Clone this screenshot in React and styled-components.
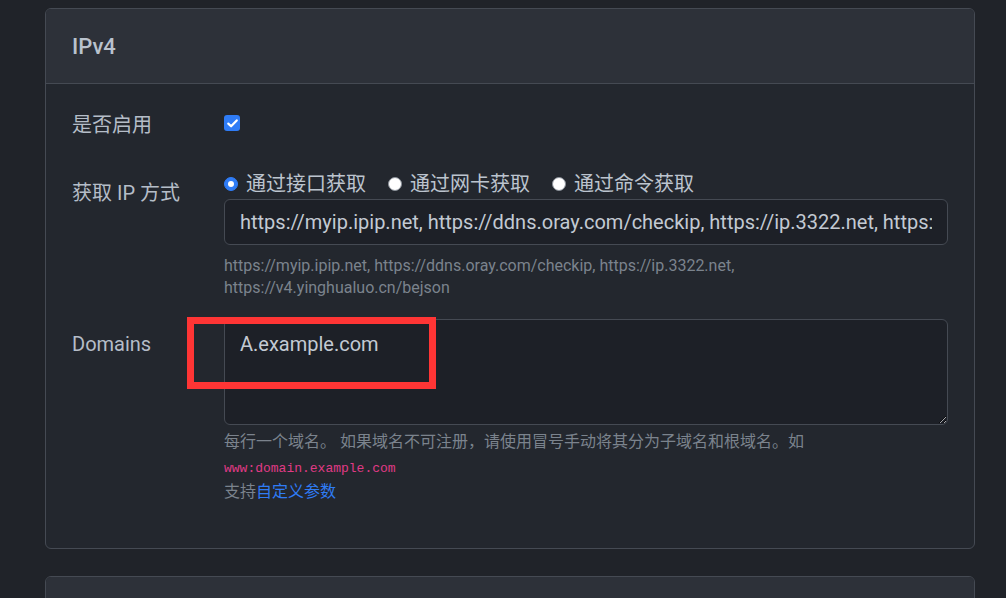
import React from "react";
import styled, { createGlobalStyle } from "styled-components";

const Global = createGlobalStyle`
  html, body { margin: 0; padding: 0; overflow: hidden; background: #202329; }
  body { font-family: Roboto, "Noto Sans CJK SC", sans-serif; }
  * { box-sizing: border-box; }
`;

const Page = styled.div`
  padding: 8px 31px 0 45px;
  display: flex;
  flex-direction: column;
  gap: 27px;
`;

const Card = styled.section`
  border: 1px solid #454a53;
  border-radius: 6px;
  background: #23272e;
  overflow: hidden;
`;

const CardHeader = styled.div`
  height: 75px;
  display: flex;
  align-items: center;
  padding: 1px 26px 0;
  background: #2d3139;
  border-bottom: 1px solid #454a53;
  color: #b9c2cd;
  font-size: 22px;
  font-weight: 500;
`;

const CardBody = styled.div`
  padding: 18px 26px 45px;
  display: flex;
  flex-direction: column;
`;

const Row = styled.div`
  position: relative;
  display: grid;
  grid-template-columns: 152px 1fr;
  margin-bottom: ${(p) => p.$mb ?? 0}px;
`;

const Label = styled.div`
  padding-top: ${(p) => p.$pt ?? 8}px;
  padding-bottom: 8px;
  font-size: 20px;
  line-height: 30px;
  color: #b5bdc8;
`;

const Field = styled.div`
  display: flex;
  flex-direction: column;
  padding-top: ${(p) => p.$pt ?? 0}px;
`;

const CheckBox = styled.span`
  width: 16px;
  height: 16px;
  border-radius: 3px;
  background: #2f7cf6;
  display: flex;
  align-items: center;
  justify-content: center;
`;

const RadioGroup = styled.div`
  display: flex;
  align-items: center;
  gap: 22px;
  height: 30px;
`;

const RadioItem = styled.label`
  display: flex;
  align-items: center;
  gap: 8px;
  font-size: 20px;
  line-height: 30px;
  color: #bcc4ce;
`;

const RadioDot = styled.span`
  width: 14px;
  height: 14px;
  border-radius: 50%;
  flex: none;
  background: ${(p) => (p.$on ? "#2f7cf6" : "#ffffff")};
  border: 1px solid ${(p) => (p.$on ? "#2f7cf6" : "#8a9099")};
  display: flex;
  align-items: center;
  justify-content: center;
  &::after {
    content: "";
    display: ${(p) => (p.$on ? "block" : "none")};
    width: 6px;
    height: 6px;
    border-radius: 50%;
    background: #ffffff;
  }
`;

const TextInput = styled.input`
  width: 100%;
  height: 46px;
  padding: 7px 15px;
  font-family: Roboto, "Noto Sans CJK SC", sans-serif;
  font-size: 20px;
  line-height: 30px;
  color: #c3cad3;
  background: #1d2027;
  border: 1px solid #454a53;
  border-radius: 6px;
  outline: none;
`;

const TextArea = styled.textarea`
  display: block;
  width: 100%;
  height: 106px;
  padding: 9px 15px;
  font-family: Roboto, "Noto Sans CJK SC", sans-serif;
  font-size: 20px;
  line-height: 30px;
  color: #c3cad3;
  background: #1d2027;
  border: 1px solid #454a53;
  border-radius: 6px;
  outline: none;
  resize: vertical;
  color-scheme: dark;
`;

const Hint = styled.div`
  margin-top: ${(p) => p.$mt ?? 0}px;
  font-size: 16px;
  line-height: 22px;
  color: #7b838d;
`;

const Code = styled.code`
  display: block;
  margin-top: 5px;
  margin-bottom: 1px;
  font-family: "Liberation Mono", "DejaVu Sans Mono", monospace;
  font-size: 13px;
  line-height: 22px;
  color: #e03a86;
`;

const Link = styled.a`
  color: #2f7cf6;
  text-decoration: none;
`;

const Annotation = styled.div`
  position: absolute;
  left: 115px;
  top: -2px;
  width: 249px;
  height: 72px;
  border: 7px solid #ff3535;
  pointer-events: none;
`;

const CheckIcon = () => (
  <svg width="11" height="9" viewBox="0 0 11 9" fill="none">
    <path d="M1.3 4.6 L4.1 7.3 L9.7 1.4" stroke="#fff" strokeWidth="2.2" strokeLinecap="round" strokeLinejoin="round" />
  </svg>
);

const urls =
  "https://myip.ipip.net, https://ddns.oray.com/checkip, https://ip.3322.net, https://v4.yinghualuo.cn/bejson";

export default function App() {
  return (
    <>
      <Global />
      <Page>
        <Card>
          <CardHeader>IPv4</CardHeader>
          <CardBody>
            <Row $mb={21}>
              <Label>是否启用</Label>
              <Field $pt={13}>
                <CheckBox>
                  <CheckIcon />
                </CheckBox>
              </Field>
            </Row>
            <Row $mb={20}>
              <Label $pt={9}>获取 IP 方式</Label>
              <Field>
                <RadioGroup>
                  <RadioItem>
                    <RadioDot $on />
                    通过接口获取
                  </RadioItem>
                  <RadioItem>
                    <RadioDot />
                    通过网卡获取
                  </RadioItem>
                  <RadioItem>
                    <RadioDot />
                    通过命令获取
                  </RadioItem>
                </RadioGroup>
                <TextInput defaultValue={urls} readOnly />
                <Hint $mt={10}>
                  https://myip.ipip.net, https://ddns.oray.com/checkip, https://ip.3322.net,
                  <br />
                  https://v4.yinghualuo.cn/bejson
                </Hint>
              </Field>
            </Row>
            <Row>
              <Label $pt={10}>Domains</Label>
              <Field>
                <TextArea defaultValue="A.example.com" readOnly />
                <Hint $mt={6}>
                  每行一个域名。 如果域名不可注册，请使用冒号手动将其分为子域名和根域名。如
                  <Code>www:domain.example.com</Code>
                  支持<Link href="#">自定义参数</Link>
                </Hint>
              </Field>
              <Annotation />
            </Row>
          </CardBody>
        </Card>
        <Card>
          <CardHeader />
        </Card>
      </Page>
    </>
  );
}
